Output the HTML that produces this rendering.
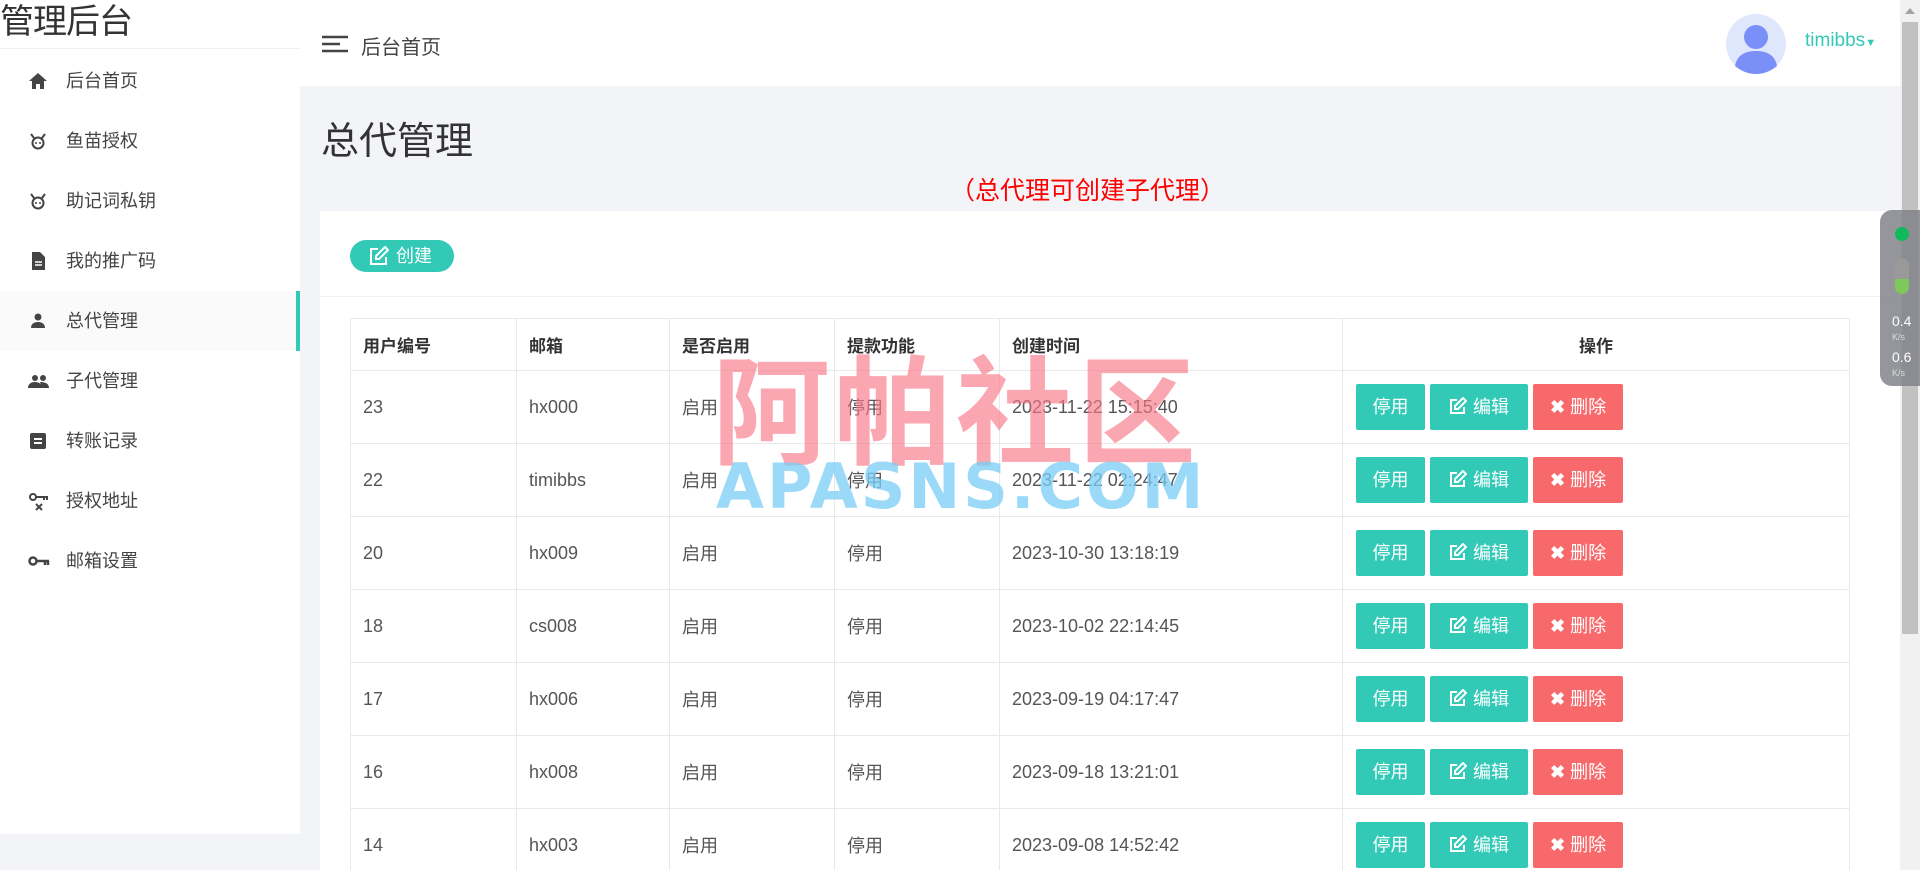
<!DOCTYPE html>
<html><head><meta charset="utf-8"><style>
*{margin:0;padding:0;box-sizing:border-box}
html{width:1920px;height:870px;overflow:hidden}
body{width:1920px;height:870px;overflow:hidden;background:#f3f4f8;font-family:"Liberation Sans","Noto Sans CJK SC",sans-serif;color:#555;position:relative}
.side{position:absolute;left:0;top:0;width:300px;height:834px;background:#fff}
.side h1{font-weight:normal;font-size:34px;color:#333;height:49px;line-height:44px;border-bottom:1px solid #f1f1f1;letter-spacing:-1px}
.item{position:absolute;left:0;width:300px;height:60px;line-height:60px;font-size:18px;color:#444}
.item span{position:absolute;left:66px}
.item svg{position:absolute;left:28px;top:21px}
.item.act{background:#fafafa;border-right:4px solid #33c9b7}
.top{position:absolute;left:300px;top:0;width:1600px;height:86px;background:#fff}
.panel{position:absolute;left:320px;top:211px;width:1580px;height:659px;background:#fff}
table{position:absolute;left:350px;top:318px;border-collapse:collapse;font-size:18px;color:#555}
td,th{border:1px solid #e9e9e9;padding:0 12px;text-align:left}
th{height:52px;font-weight:bold;color:#333;font-size:17px}
td{height:73px}
.b{display:inline-block;height:46px;line-height:46px;color:#fff;font-size:18px;border-radius:2px;text-align:center;vertical-align:middle}
.g{background:#33c9b7}.r{background:#f8696b}
.wrap{position:absolute;left:0;top:0;width:1920px;height:870px;overflow:hidden}
</style></head><body><div class="wrap">
<div class="side"><h1>管理后台</h1></div>
<div class="item" style="top:51px"><svg width="20" height="18" viewBox="0 0 20 18"><path d="M10 1L1 9h3v8h4v-5h4v5h4V9h3z" fill="#444"/></svg><span>后台首页</span></div>
<div class="item" style="top:111px"><svg width="20" height="18" viewBox="0 0 20 18"><circle cx="10" cy="11" r="5.5" fill="none" stroke="#444" stroke-width="2"/><path d="M3 2l3 4M17 2l-3 4" stroke="#444" stroke-width="2"/><circle cx="8" cy="11" r="1" fill="#444"/><circle cx="12" cy="11" r="1" fill="#444"/></svg><span>鱼苗授权</span></div>
<div class="item" style="top:171px"><svg width="20" height="18" viewBox="0 0 20 18"><circle cx="10" cy="11" r="5.5" fill="none" stroke="#444" stroke-width="2"/><path d="M3 2l3 4M17 2l-3 4" stroke="#444" stroke-width="2"/><circle cx="8" cy="11" r="1" fill="#444"/><circle cx="12" cy="11" r="1" fill="#444"/></svg><span>助记词私钥</span></div>
<div class="item" style="top:231px"><svg width="20" height="18" viewBox="0 0 20 18"><path d="M4 0h8l5 5v13H4z" fill="#444"/><path d="M7 10h7M7 13h7" stroke="#fff" stroke-width="1.5"/></svg><span>我的推广码</span></div>
<div class="item act" style="top:291px"><svg width="20" height="18" viewBox="0 0 20 18"><circle cx="10" cy="5" r="3.5" fill="#444"/><path d="M3 16c0-4 3-6 7-6s7 2 7 6z" fill="#444"/></svg><span>总代管理</span></div>
<div class="item" style="top:351px"><svg width="22" height="18" viewBox="0 0 22 18"><circle cx="7" cy="6" r="3" fill="#444"/><circle cx="15" cy="6" r="3" fill="#444"/><path d="M0 16c0-4 3-6 7-6s7 2 7 6zM12 10c4 0 9 1 9 6h-7z" fill="#444"/></svg><span>子代管理</span></div>
<div class="item" style="top:411px"><svg width="20" height="18" viewBox="0 0 20 18"><rect x="2" y="1" width="16" height="16" rx="2" fill="#444"/><path d="M6 7h8M6 11h8" stroke="#fff" stroke-width="2"/></svg><span>转账记录</span></div>
<div class="item" style="top:471px"><svg width="22" height="20" viewBox="0 0 22 20"><circle cx="5" cy="5" r="3" fill="none" stroke="#444" stroke-width="2"/><path d="M8 5h12M16 5v3M19 5v3M8 12l6 6M14 12l-6 6" stroke="#444" stroke-width="2"/></svg><span>授权地址</span></div>
<div class="item" style="top:531px"><svg width="22" height="18" viewBox="0 0 22 18"><circle cx="5" cy="9" r="3.5" fill="none" stroke="#444" stroke-width="2.5"/><path d="M8 9h13M17 9v4M20 9v4" stroke="#444" stroke-width="2.5"/></svg><span>邮箱设置</span></div>

<div class="top">
<svg style="position:absolute;left:22px;top:35px" width="26" height="18"><path d="M0 2h26M0 9h18M0 16h26" stroke="#444" stroke-width="2.5"/></svg>
<div style="position:absolute;left:61px;top:31px;font-size:20px;color:#444">后台首页</div>
<svg style="position:absolute;left:1426px;top:14px" width="60" height="60"><circle cx="30" cy="30" r="30" fill="#dfe7fd"/><circle cx="30" cy="23" r="12" fill="#7b8ff8"/><path d="M9 52c2-11 10-15 21-15s19 4 21 15c-6 5-13 8-21 8s-15-3-21-8z" fill="#7b8ff8"/></svg>
<div style="position:absolute;left:1505px;top:30px;font-size:19px;color:#33c9b7">timibbs<span style="font-size:11px">▼</span></div>
</div>
<div style="position:absolute;left:1900px;top:0;width:20px;height:870px;background:#f1f1f1"></div>
<div style="position:absolute;left:1902px;top:22px;width:16px;height:612px;background:#c1c1c1"></div>
<div style="position:absolute;left:1905px;top:8px;width:0;height:0;border:5px solid transparent;border-bottom:6px solid #a3a3a3;border-top:0"></div>

<div style="position:absolute;left:321px;top:110px;font-size:38px;color:#333">总代管理</div>
<div style="position:absolute;left:950px;top:171px;font-size:25px;color:#f00">（总代理可创建子代理）</div>
<div class="panel"></div>
<div style="position:absolute;left:350px;top:240px;width:104px;height:32px;border-radius:16px;background:#33c9b7;color:#fff;font-size:18px;line-height:32px;padding-left:46px">创建</div>
<svg style="position:absolute;left:369px;top:246px" width="20" height="20"><path d="M9 3H2v15h15v-7" fill="none" stroke="#fff" stroke-width="2"/><path d="M16 1l3 3-9 9H7v-3z" fill="none" stroke="#fff" stroke-width="2"/></svg>
<div style="position:absolute;left:320px;top:296px;width:1580px;height:1px;background:#f2f2f2"></div>

<table>
<tr><th style="width:166px">用户编号</th><th style="width:153px">邮箱</th><th style="width:165px">是否启用</th><th style="width:165px">提款功能</th><th style="width:343px">创建时间</th><th style="width:507px;text-align:center">操作</th></tr>
<tr><td>23</td><td>hx000</td><td>启用</td><td>停用</td><td>2023-11-22 15:15:40</td><td>OPS</td></tr>
<tr><td>22</td><td>timibbs</td><td>启用</td><td>停用</td><td>2023-11-22 02:24:47</td><td>OPS</td></tr>
<tr><td>20</td><td>hx009</td><td>启用</td><td>停用</td><td>2023-10-30 13:18:19</td><td>OPS</td></tr>
<tr><td>18</td><td>cs008</td><td>启用</td><td>停用</td><td>2023-10-02 22:14:45</td><td>OPS</td></tr>
<tr><td>17</td><td>hx006</td><td>启用</td><td>停用</td><td>2023-09-19 04:17:47</td><td>OPS</td></tr>
<tr><td>16</td><td>hx008</td><td>启用</td><td>停用</td><td>2023-09-18 13:21:01</td><td>OPS</td></tr>
<tr><td>14</td><td>hx003</td><td>启用</td><td>停用</td><td>2023-09-08 14:52:42</td><td>OPS</td></tr>
</table>
<script>
document.querySelectorAll('td').forEach(function(t){if(t.textContent==='OPS'){t.style.padding='0 0 0 13px';t.innerHTML='<span class="b g" style="width:69px">停用</span> <span class="b g" style="width:98px"><svg width="18" height="18" style="vertical-align:-2px;margin-right:6px"><path d="M8 3H2v13h13v-6" fill="none" stroke="#fff" stroke-width="2"/><path d="M14 1l3 3-8 8H6V9z" fill="none" stroke="#fff" stroke-width="2"/></svg>编辑</span> <span class="b r" style="width:90px"><b style="margin-right:5px">✖</b>删除</span>';}});
</script>

<div style="position:absolute;left:712px;top:345px;font-size:118px;font-weight:bold;color:rgba(249,120,135,0.65);letter-spacing:4px;font-family:'Noto Sans CJK SC',sans-serif;line-height:118px">阿帕社区</div>
<div style="position:absolute;left:716px;top:450px;font-size:62px;font-weight:bold;color:rgba(120,205,245,0.75);letter-spacing:3px;font-family:'DejaVu Sans',sans-serif;line-height:74px">APASNS.COM</div>

<div style="position:absolute;left:1880px;top:210px;width:40px;height:176px;background:rgba(130,132,138,0.85);border-radius:12px 0 0 12px">
<div style="position:absolute;left:15px;top:17px;width:14px;height:14px;border-radius:50%;background:#0fba5c"></div>
<div style="position:absolute;left:15px;top:48px;width:14px;height:36px;border-radius:7px;background:#999"><div style="position:absolute;bottom:0;width:14px;height:15px;border-radius:0 0 7px 7px;background:#7cc85a"></div></div>
<div style="position:absolute;left:12px;top:104px;color:#fff;font-size:14px;line-height:14px">0.4<br><span style="font-size:9px;color:#ddd">K/s</span></div>
<div style="position:absolute;left:12px;top:140px;color:#fff;font-size:14px;line-height:14px">0.6<br><span style="font-size:9px;color:#ddd">K/s</span></div>
</div>
</div></body></html>
